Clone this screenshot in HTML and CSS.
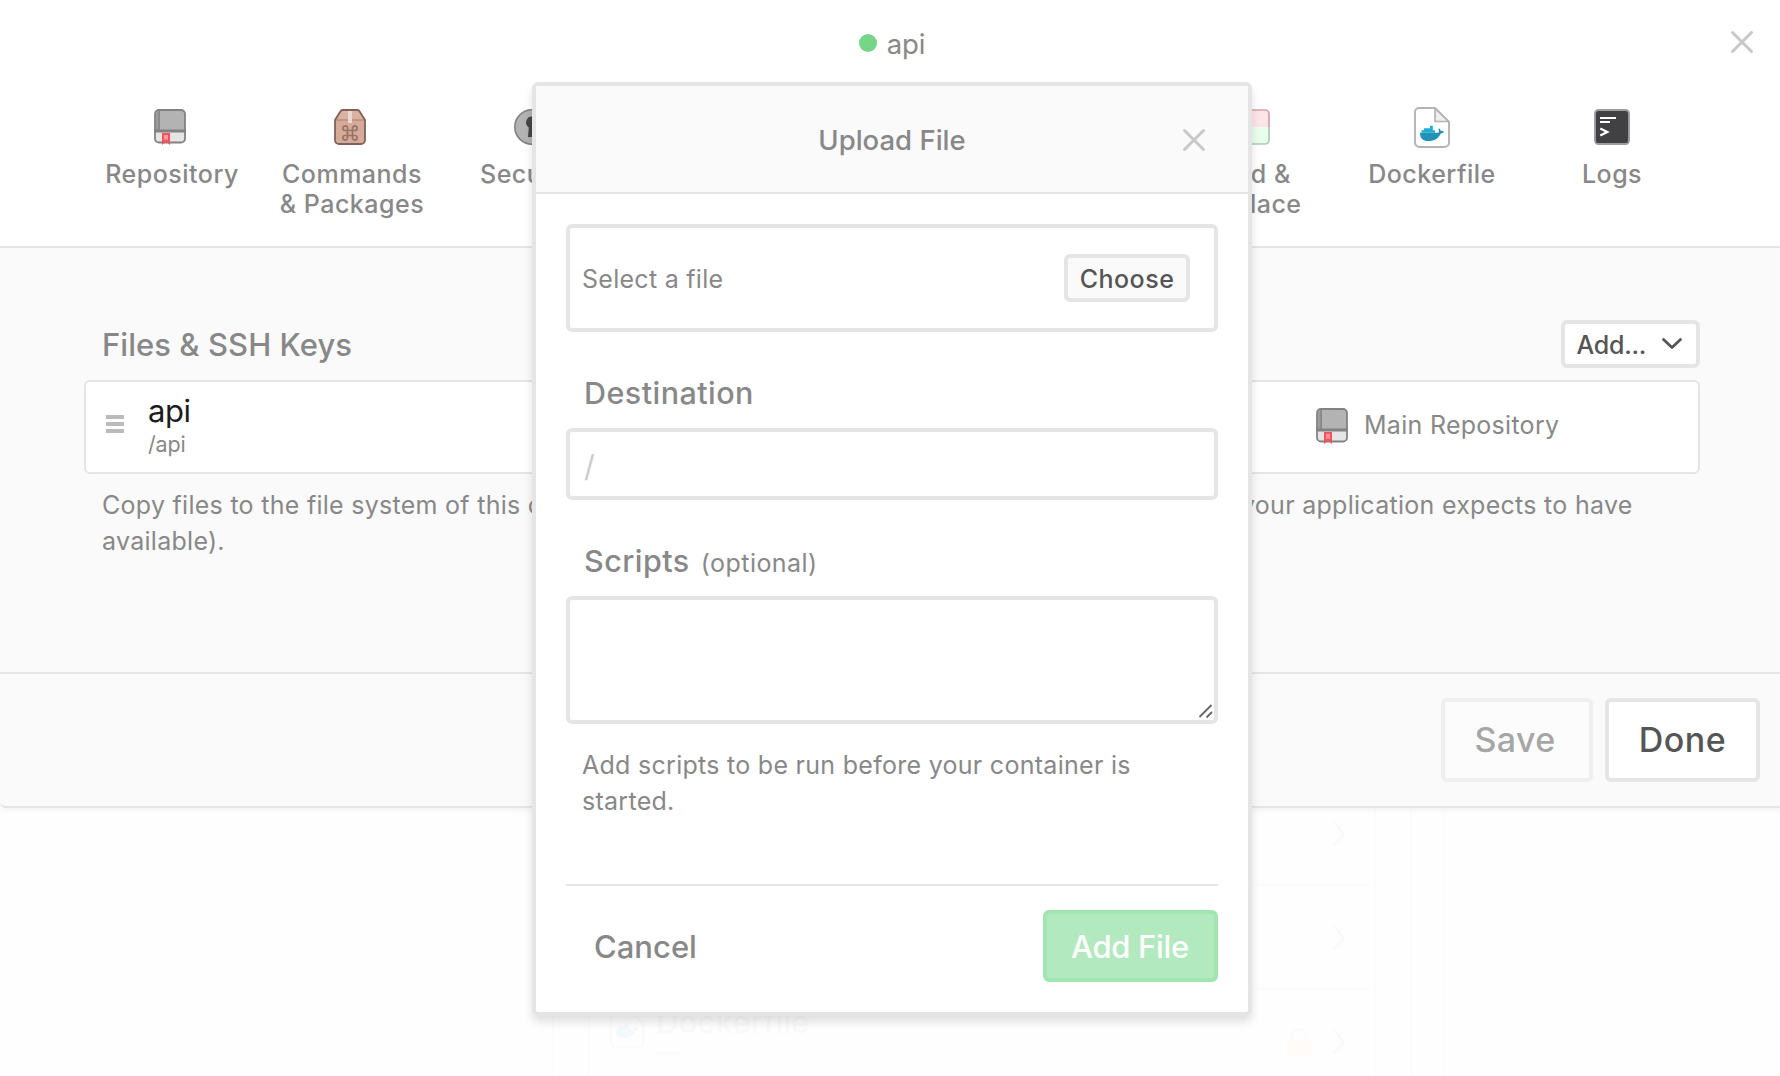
FILE: index.html
```html
<!DOCTYPE html>
<html lang="en">
<head>
<meta charset="utf-8">
<title>api</title>
<link rel="stylesheet" href="styles.css">
</head>
<body>
<svg class="defs" width="0" height="0" aria-hidden="true">
  <symbol id="book" viewBox="0 0 36 36">
    <path d="M1 21h30v8.500a4 4 0 0 1-4 4H5a4 4 0 0 1-4-4z" fill="#e5e5e5" stroke="#828282" stroke-width="1.800"/>
    <path d="M5 1h22a4 4 0 0 1 4 4v17.500H1V5a4 4 0 0 1 4-4z" fill="#b3b3b3" stroke="#828282" stroke-width="1.800"/>
    <path d="M1.900 5.500A4 4 0 0 1 5 2v19H1.900z" fill="#9b9b9b"/>
    <path d="M5.200 1v20.500M1 21.200h30" stroke="#828282" stroke-width="1.400" fill="none"/>
    <path d="M8 24h8v12l-4-3.500L8 36z" fill="#f4505f"/>
    <path d="M10 26h4v5.500l-2-1.500-2 1.500z" fill="#fb9aa3"/>
  </symbol>
  <symbol id="whale" viewBox="0 0 24 16">
    <path d="M0 7.300h17.500c1.200 0 1.800-.6 1.400-1.700-.5-1.100-.4-2 .3-2.800.9.700 1.400 1.500 1.500 2.600 1.100-.1 2.200 0 3.300.6-.6 1.300-1.700 1.900-3.200 2C18.500 13 14.500 15.600 8.500 15.600 3 15.600 0 13 0 7.300z" fill="#2390b8"/>
    <path d="M1.500 4.800H4V2.800h6V0h2.800v4.800H15v2.400H1.500z" fill="#20acd3"/>
  </symbol>
</svg>

<main class="panel">
  <header class="panel-title">
    <h1 class="name"><span class="status"></span>api</h1>
    <button class="close" aria-label="Close"><svg width="24" height="24" viewBox="0 0 24 24"><path d="M2.500 2.500l19 19M21.500 2.500l-19 19"/></svg></button>
  </header>

  <nav class="tabs">
    <a class="tab"><svg class="tab-icon"><use href="#book"/></svg>Repository</a>
    <a class="tab">
      <svg class="tab-icon" viewBox="0 0 36 36">
        <path d="M1 11L6.500 2.200Q7.200 1 8.600 1h14.800q1.400 0 2.100 1.200L31 11v20a4 4 0 0 1-4 4H5a4 4 0 0 1-4-4z" fill="#d5aa99"/>
        <path d="M1.500 11L7 2h18l5.500 9z" fill="#d9b2a3"/>
        <path d="M1 11h30" stroke="#b88e7f" stroke-width="1.500"/>
        <path d="M14 2h4v12h-4z" fill="#ecd8d0"/>
        <path d="M1 11L6.500 2.200Q7.200 1 8.600 1h14.800q1.400 0 2.100 1.200L31 11v20a4 4 0 0 1-4 4H5a4 4 0 0 1-4-4z" fill="none" stroke="#7d6359" stroke-width="1.800"/>
        <path d="M13.500 21.500h5v5h-5zM13.500 21.500h-2.300a2.300 2.300 0 1 1 2.300-2.300zM18.500 21.500v-2.300a2.300 2.300 0 1 1 2.300 2.300zM18.500 26.500h2.300a2.300 2.300 0 1 1-2.300 2.300zM13.500 26.500v2.300a2.300 2.300 0 1 1-2.300-2.300z" fill="none" stroke="#967468" stroke-width="1.700"/>
      </svg>Commands<br>&amp; Packages</a>
    <a class="tab">
      <svg class="tab-icon" viewBox="0 0 36 36">
        <circle cx="18" cy="18" r="17.200" fill="#b3b3b3" stroke="#828282" stroke-width="1.600"/>
        <path d="M18 7.500a6 6 0 0 0-3.200 11L14 28h8l-.8-9.500A6 6 0 0 0 18 7.500z" fill="#444"/>
      </svg>Security</a>
    <a class="tab tab-find">
      <svg class="tab-icon" viewBox="0 0 36 36">
        <path d="M5 1h26a4 4 0 0 1 4 4v13H1V5a4 4 0 0 1 4-4z" fill="#fde4e7"/>
        <path d="M1 18h34v13a4 4 0 0 1-4 4H5a4 4 0 0 1-4-4z" fill="#e8ffee"/>
        <path d="M1 18V5a4 4 0 0 1 4-4h26a4 4 0 0 1 4 4v13" fill="none" stroke="#cfa3a9" stroke-width="1.700"/>
        <path d="M1 18v13a4 4 0 0 0 4 4h26a4 4 0 0 0 4-4V18" fill="none" stroke="#aec9b5" stroke-width="1.700"/>
      </svg>Find &amp;<br>Replace</a>
    <a class="tab">
      <svg class="tab-icon tall" viewBox="0 0 36 41">
        <path d="M5 1h16l14 14v20.500a4.500 4.500 0 0 1-4.500 4.500H5.500A4.500 4.500 0 0 1 1 35.500V5a4 4 0 0 1 4-4z" fill="#fff" stroke="#b3b3b3" stroke-width="1.900"/>
        <path d="M21 1.500v13h13.500z" fill="#efefef" stroke="#b3b3b3" stroke-width="1.700" stroke-linejoin="round"/>
        <use href="#whale" x="6" y="18.500" width="24" height="16"/>
      </svg>Dockerfile</a>
    <a class="tab">
      <svg class="tab-icon" viewBox="0 0 36 36">
        <rect x="1" y="1" width="34" height="34" rx="3.500" fill="#414143" stroke="#9d9d9f" stroke-width="1.900"/>
        <path d="M6 9h16M6 13h10" stroke="#fff" stroke-width="2"/>
        <path d="M6.300 19.500l7 3.500-7 3.500" fill="none" stroke="#fff" stroke-width="2.200"/>
      </svg>Logs</a>
  </nav>

  <section class="content">
    <div class="section-head">
      <h2>Files &amp; SSH Keys</h2>
      <button class="btn btn-add"><span>Add...</span><svg width="22" height="14" viewBox="0 0 22 14"><path d="M2.500 2.500l8.500 8 8.500-8"/></svg></button>
    </div>
    <div class="row">
      <span class="grip"><i></i><i></i><i></i></span>
      <div class="file"><span class="file-name">api</span><span class="file-path">/api</span></div>
      <div class="source"><svg class="source-icon"><use href="#book"/></svg>Main Repository</div>
    </div>
    <p class="note"><span>Copy files to the file system of this container</span> <span>(such as configuration files your application expects to have</span><br>available).</p>
  </section>

  <footer class="panel-foot">
    <button class="btn btn-lg btn-save" disabled>Save</button>
    <button class="btn btn-lg btn-done">Done</button>
  </footer>
</main>

<div class="backdrop-list">
  <div class="list-group">
    <div class="list-card">
      <div class="list-row"><svg class="chev" viewBox="0 0 14 28"><path d="M2 2l10 12L2 26"/></svg></div>
      <div class="list-row"><svg class="chev" viewBox="0 0 14 28"><path d="M2 2l10 12L2 26"/></svg></div>
      <div class="list-row">
        <svg class="list-icon" viewBox="0 0 36 41"><path d="M5 1h16l14 14v20.500a4.500 4.500 0 0 1-4.500 4.500H5.500A4.500 4.500 0 0 1 1 35.500V5a4 4 0 0 1 4-4z" fill="#fefefe" stroke="#fafafa" stroke-width="1.900"/><use href="#whale" x="6" y="15" width="24" height="16" opacity=".04"/></svg>
        <div class="list-text">Dockerfile<i></i></div>
        <svg class="lock" viewBox="0 0 26 28"><path d="M6 13V8a7 7 0 0 1 14 0v5" fill="none" stroke="#fbfbfb" stroke-width="2.500"/><rect y="12" width="26" height="16" rx="2" fill="#fefbf8"/></svg>
        <svg class="chev" viewBox="0 0 14 28"><path d="M2 2l10 12L2 26"/></svg>
      </div>
    </div>
  </div>
</div>

<div class="modal" role="dialog">
  <header class="modal-head">
    <h2>Upload File</h2>
    <button class="close" aria-label="Close"><svg width="24" height="24" viewBox="0 0 24 24"><path d="M2.500 2.500l19 19M21.500 2.500l-19 19"/></svg></button>
  </header>
  <div class="modal-body">
    <div class="picker"><span>Select a file</span><button class="btn btn-choose">Choose</button></div>
    <label class="label">Destination</label>
    <input class="input" placeholder="/">
    <label class="label">Scripts <small>(optional)</small></label>
    <div class="textarea"><svg width="16" height="16" viewBox="0 0 16 16"><path d="M1.500 14L13.500 2M8.500 14.500l5.500-5.500"/></svg></div>
    <p class="help">Add scripts to be run before your container is started.</p>
    <footer class="modal-foot">
      <button class="cancel">Cancel</button>
      <button class="btn btn-primary" disabled>Add File</button>
    </footer>
  </div>
</div>
</body>
</html>
```
FILE: styles.css
```css
* { box-sizing: border-box; }

body {
  margin: 0;
  height: 1076px;
  overflow: hidden;
  background: #fefefe;
  color: #888;
  font: 400 25px/36px Inter, "Liberation Sans", sans-serif;
  letter-spacing: .28px;
}

h1, h2, p { margin: 0; }
button { font: inherit; color: inherit; letter-spacing: inherit; padding: 0; background: none; border: 0; }
svg { display: block; flex: none; }
.defs { position: absolute; }

/* Service panel */
.panel {
  position: relative;
  z-index: 1;
  height: 808px;
  margin-right: -4px;
  display: flex;
  flex-direction: column;
  background: #fafafa;
  border-bottom: 2px solid #e5e5e5;
  border-radius: 0 0 6px 6px;
  box-shadow: 0 2px 6px rgba(0, 0, 0, .05);
}

.panel-title {
  display: grid;
  grid-template-columns: 1fr auto 1fr;
  height: 86px;
  padding-right: 30px;
  padding-left: 30px;
  background: #fff;
}
.name {
  grid-column: 2;
  display: flex;
  gap: 10px;
  padding-top: 26px;
  font-size: 27.500px;
  font-weight: 400;
  line-height: 36px;
  letter-spacing: -.1px;
}
.status { width: 18px; height: 18px; margin-top: 8px; border-radius: 50%; background: #75d687; }
.close { align-self: center; justify-self: end; line-height: 0; }
.close path { fill: none; stroke: #c8c8c8; stroke-width: 3; stroke-linecap: round; }
.panel-title .close { align-self: start; padding-top: 30px; }

.tabs {
  display: grid;
  grid-template-columns: repeat(9, 180px);
  justify-content: center;
  height: 162px;
  padding-top: 23px;
  background: #fff;
  border-bottom: 2px solid #e5e5e5;
}
.tab {
  font-weight: 500;
  line-height: 30px;
  letter-spacing: .5px;
  text-align: center;
}
.tab-find { grid-column: 7; }
.tab-icon { width: 36px; height: 36px; margin: 0 auto 14px; }
.tab-icon.tall { height: 41px; margin-top: -2.500px; margin-bottom: 11.500px; }

.content { flex: 1; padding: 72px 84px 0; }
.section-head { display: flex; justify-content: space-between; height: 60px; }
.section-head h2 {
  padding: 7px 0 0 18px;
  font-size: 31px;
  font-weight: 500;
  line-height: 36px;
  letter-spacing: .05px;
}

.btn {
  border: 4px solid #e5e5e5;
  border-radius: 6px;
  background: #fff;
  color: #555;
  font-weight: 500;
}
.btn-add {
  display: flex;
  align-items: center;
  justify-content: space-between;
  width: 139px;
  height: 48px;
  padding: 0 13px 0 11.500px;
  letter-spacing: -.26px;
}
.btn-add span { padding-top: 2px; }
.btn-add path { fill: none; stroke: #555; stroke-width: 2.800; stroke-linecap: round; stroke-linejoin: round; }

.row {
  display: flex;
  align-items: center;
  height: 94px;
  padding: 0 20px;
  background: #fff;
  border: 2px solid #e5e5e5;
  border-radius: 6px;
}
.grip { display: grid; gap: 3px; width: 18px; margin-top: -6px; }
.grip i { height: 4px; background: #bbb; }
.file { flex: 1; display: grid; padding-left: 24px; }
.file-name { color: #1c1c1c; font-size: 31px; line-height: 32px; letter-spacing: -.5px; }
.file-path { padding-top: 1px; margin-bottom: -1px; font-size: 21.500px; line-height: 32px; letter-spacing: -.2px; }
.source { display: flex; align-items: center; gap: 12px; width: 362px; margin-top: -4px; }
.source-icon { width: 36px; height: 36px; margin-top: 2px; }
.note { display: block; padding: 13px 0 0 18px; white-space: nowrap; }
.note span { display: inline-block; }
.note span:first-child { width: 796px; }

.panel-foot {
  display: flex;
  justify-content: flex-end;
  gap: 12px;
  height: 134px;
  padding: 24px 24px 0;
  border-top: 2px solid #e5e5e5;
}
.btn-lg { width: 155px; height: 84px; padding-bottom: 1px; font-size: 34px; letter-spacing: .5px; }
.btn-save { width: 152px; padding-right: 4px; letter-spacing: .3px; opacity: .5; }

/* Faded list behind the panel */
.backdrop-list {
  display: flex;
  justify-content: center;
  width: 926px;
  height: 294px;
  margin: -26px 0 0 519px;
  overflow: hidden;
  border: solid #fdfdfd;
  border-width: 0 2px;
}
.list-group {
  display: flex;
  justify-content: center;
  width: 860px;
  border: solid #fcfcfc;
  border-width: 0 2px;
}
.list-card { width: 788px; border: solid #fcfcfc; border-width: 0 2px; }
.list-row {
  display: flex;
  align-items: center;
  height: 104px;
  padding: 2px 28px 0 20px;
  border-bottom: 2px solid #fcfcfc;
}
.list-row .chev { margin-left: auto; }
.chev { width: 14px; height: 28px; fill: none; stroke: #f9f9f9; stroke-width: 2; }
.list-icon { width: 34px; height: 39px; margin-top: -28px; }
.list-text { margin-top: -26px; padding-left: 12px; color: #f9f9f9; font-size: 31px; letter-spacing: .4px; }
.list-text i { display: block; width: 25px; height: 2px; margin-top: 12px; background: #fafafa; }
.lock { width: 26px; height: 28px; margin-left: auto; }
.lock + .chev { margin-left: 20px; }

/* Upload dialog */
.modal {
  position: absolute;
  z-index: 2;
  top: 82px;
  left: 532px;
  width: 720px;
  height: 934px;
  background: #fff;
  border: 4px solid #e5e5e5;
  border-radius: 6px;
  box-shadow: 0 6px 10px rgba(0, 0, 0, .12);
}
.modal-head {
  display: grid;
  grid-template-columns: 1fr auto 1fr;
  align-items: center;
  height: 108px;
  padding: 2px 42px 0;
  background: #fafafa;
  border-bottom: 2px solid #e5e5e5;
}
.modal-head h2 { grid-column: 2; font-size: 27.500px; font-weight: 500; letter-spacing: 0; }
.modal-body { padding: 30px; }
.picker {
  display: flex;
  align-items: center;
  justify-content: space-between;
  height: 108px;
  padding: 0 24px 0 12px;
  border: 4px solid #e5e5e5;
  border-radius: 6px;
}
.picker span { padding-top: 2px; }
.btn-choose { width: 126px; height: 48px; padding-top: 2px; background: #fafafa; letter-spacing: .5px; }
.label {
  display: block;
  height: 96px;
  padding: 43px 0 0 18px;
  font-size: 30.500px;
  font-weight: 500;
  letter-spacing: .45px;
}
.label small { margin-left: 2.500px; font-size: 25px; font-weight: 400; }
.input, .textarea {
  display: block;
  width: 100%;
  height: 72px;
  background: #fff;
  border: 4px solid #e5e5e5;
  border-radius: 6px;
}
.input { padding: 3px 14px 0; font: 400 30px/36px Inter, "Liberation Sans", sans-serif; }
.input::placeholder { color: #ccc; opacity: 1; }
.textarea { display: flex; align-items: flex-end; justify-content: flex-end; height: 128px; padding: 1px 0; }
.textarea path { fill: none; stroke: #666; stroke-width: 1.800; }
.help { height: 160px; padding: 23px 16px 0; }
.modal-foot {
  display: flex;
  justify-content: space-between;
  height: 98px;
  padding-top: 24px;
  border-top: 2px solid #e5e5e5;
}
.cancel { padding: 2px 0 0 28px; font-size: 31px; font-weight: 500; letter-spacing: 0; }
.btn-primary {
  width: 175px;
  height: 72px;
  padding: 2px 1px 0 0;
  border-color: #a1e5b0;
  background: #b2e9bf;
  color: #fff;
  font-size: 31px;
  letter-spacing: -.3px;
}
```
